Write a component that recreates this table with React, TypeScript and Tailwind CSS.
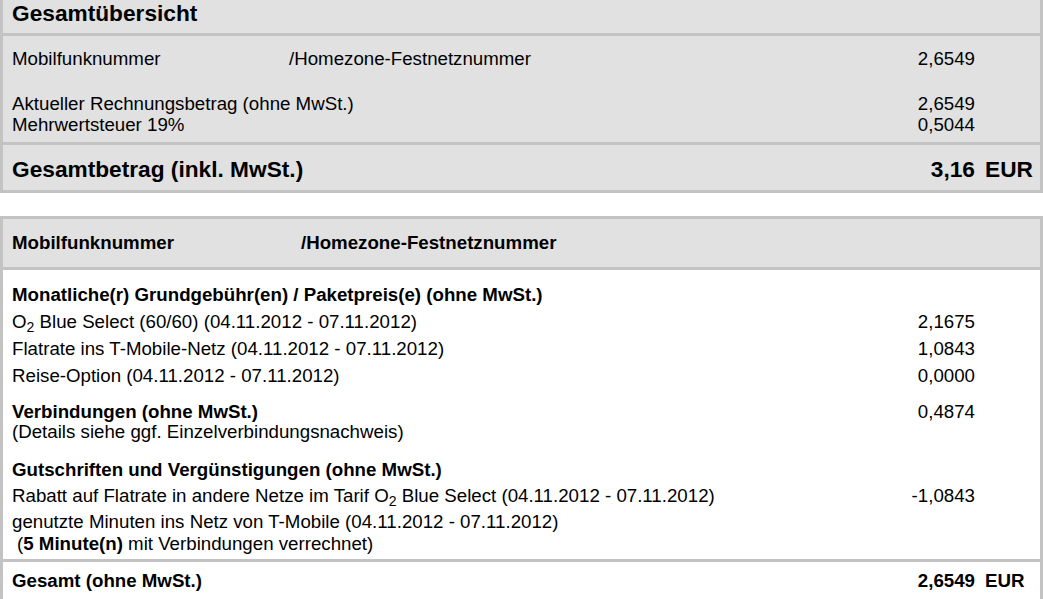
import React from "react";

interface RowProps {
  label: React.ReactNode;
  value?: string;
  unit?: string;
  className?: string;
}

function Row({ label, value, unit, className }: RowProps) {
  return (
    <div className={`flex ${className ?? ""}`}>
      <div className="flex-1 pl-[9px]">{label}</div>
      <div className="w-[140px] text-right">{value}</div>
      <div className="w-[65px] pl-[10px]">{unit}</div>
    </div>
  );
}

function TwoCol({ left, right, width }: { left: string; right: string; width: string }) {
  return (
    <span className="flex">
      <span className={width}>{left}</span>
      <span>{right}</span>
    </span>
  );
}

export default function App() {
  return (
    <div className="w-[1043px] bg-white font-['Liberation_Sans',Arial,sans-serif] text-[18.7px] text-black">
      {/* Gesamtübersicht */}
      <div className="border-x-[3px] border-b-[3px] border-[#c3c3c3] bg-[#e1e1e1]">
        <div className="h-[36px] border-b-[3px] border-[#c3c3c3] pl-[9px] pt-[2px] text-[22.7px] font-bold leading-[22px]">
          Gesamtübersicht
        </div>
        <div className="h-[109px] border-b-[3px] border-[#c3c3c3] pt-[12px] leading-[21px]">
          <Row
            label={<TwoCol left="Mobilfunknummer" right="/Homezone-Festnetznummer" width="w-[277px]" />}
            value="2,6549"
          />
          <Row className="mt-[24px]" label="Aktueller Rechnungsbetrag (ohne MwSt.)" value="2,6549" />
          <Row label="Mehrwertsteuer 19%" value="0,5044" />
        </div>
        <div className="h-[45px] pt-[13px] text-[22.7px] font-bold leading-[22px]">
          <Row label="Gesamtbetrag (inkl. MwSt.)" value="3,16" unit="EUR" />
        </div>
      </div>

      {/* Einzelnummer */}
      <div className="mt-[23px] border-x-[3px] border-t-[3px] border-[#c3c3c3]">
        <div className="h-[51px] border-b-[3px] border-[#c3c3c3] bg-[#e1e1e1] pt-[13px] font-bold leading-[21px]">
          <Row label={<TwoCol left="Mobilfunknummer" right="/Homezone-Festnetznummer" width="w-[289px]" />} />
        </div>

        <div className="h-[292px] border-b-[3px] border-[#c3c3c3] pt-[11px]">
          <div className="leading-[27px]">
            <Row className="font-bold" label="Monatliche(r) Grundgebühr(en) / Paketpreis(e) (ohne MwSt.)" />
            <Row
              label={
                <>
                  O<sub>2</sub> Blue Select (60/60) (04.11.2012 - 07.11.2012)
                </>
              }
              value="2,1675"
            />
            <Row label="Flatrate ins T-Mobile-Netz (04.11.2012 - 07.11.2012)" value="1,0843" />
            <Row label="Reise-Option (04.11.2012 - 07.11.2012)" value="0,0000" />
          </div>

          <div className="mt-[13px] leading-[20px]">
            <Row className="[&>div:first-child]:font-bold" label="Verbindungen (ohne MwSt.)" value="0,4874" />
            <Row label="(Details siehe ggf. Einzelverbindungsnachweis)" />
          </div>

          <div className="mt-[15px] leading-[26px]">
            <Row className="font-bold" label="Gutschriften und Vergünstigungen (ohne MwSt.)" />
            <Row
              label={
                <>
                  Rabatt auf Flatrate in andere Netze im Tarif O<sub>2</sub> Blue Select (04.11.2012 - 07.11.2012)
                </>
              }
              value="-1,0843"
            />
          </div>

          <div className="mt-[2px] leading-[22px]">
            <Row label="genutzte Minuten ins Netz von T-Mobile (04.11.2012 - 07.11.2012)" />
            <Row
              label={
                <span className="pl-[5px]">
                  (<span className="font-bold">5 Minute(n)</span> mit Verbindungen verrechnet)
                </span>
              }
            />
          </div>
        </div>

        <div className="h-[60px] pt-[8px] font-bold leading-[21px]">
          <Row label="Gesamt (ohne MwSt.)" value="2,6549" unit="EUR" />
        </div>
      </div>
    </div>
  );
}
